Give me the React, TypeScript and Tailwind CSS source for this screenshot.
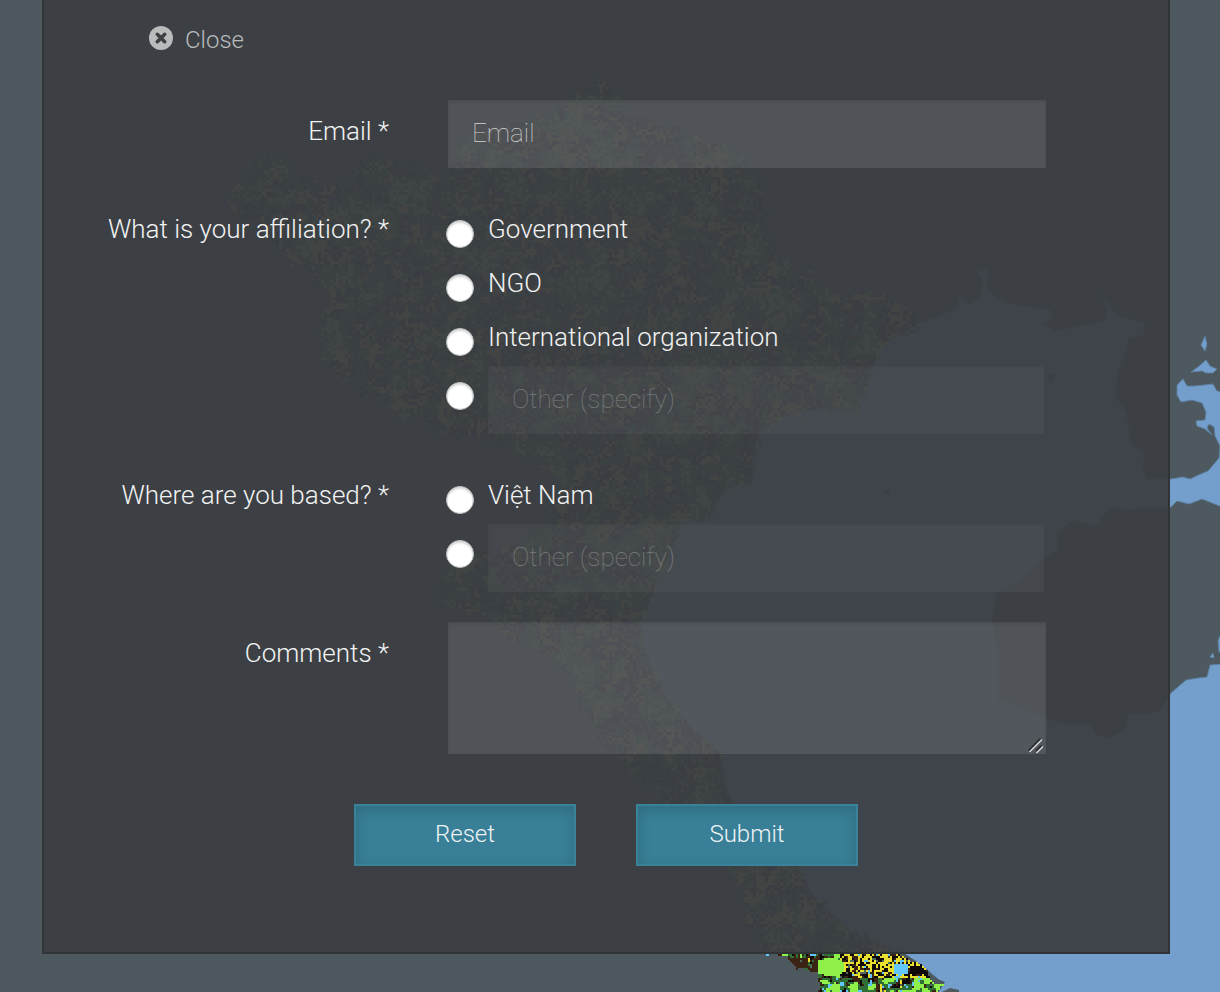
import React from "react";

type Point = [number, number];

const COUNTRY: Point[] = [
  [600, 78], [640, 120], [700, 135], [750, 160], [765, 215], [775, 255], [830, 290], [860, 290],
  [890, 296], [913, 312], [915, 332], [880, 340], [876, 360], [868, 385], [858, 412], [820, 408],
  [780, 418], [758, 434], [753, 450], [753, 482], [728, 488], [702, 522], [682, 518], [674, 545],
  [653, 590], [640, 622], [644, 650], [665, 695], [690, 725], [722, 755], [724, 780], [732, 800],
  [800, 868], [812, 895], [850, 930], [898, 952],
  [925, 968], [934, 980], [944, 984], [936, 993], [818, 993], [818, 970], [797, 968], [786, 955],
  [762, 950], [745, 920], [735, 880], [715, 855], [690, 830], [640, 778], [600, 740], [580, 700],
  [560, 660], [520, 645], [490, 620], [432, 594], [455, 555], [520, 545], [545, 515], [560, 480],
  [500, 440], [450, 435], [380, 405], [330, 370], [318, 330], [330, 290], [280, 250], [225, 203],
  [248, 158], [275, 155], [310, 185], [350, 180], [365, 152], [402, 158], [440, 180], [470, 130],
  [545, 115],
];

const TONES = ["#8ff04a", "#2f6f36", "#e9df2d", "#0e0808", "#3b2413", "#62c6ff", "#4f6a60"];

function hash(x: number, y: number) {
  const s = Math.sin(x * 127.1 + y * 311.7) * 43758.5453;
  return s - Math.floor(s);
}

function noise(x: number, y: number) {
  const ix = Math.floor(x);
  const iy = Math.floor(y);
  const fx = x - ix;
  const fy = y - iy;
  const top = hash(ix, iy) * (1 - fx) + hash(ix + 1, iy) * fx;
  const low = hash(ix, iy + 1) * (1 - fx) + hash(ix + 1, iy + 1) * fx;
  return top * (1 - fy) + low * fy;
}

function inside(x: number, y: number, poly: Point[]) {
  let hit = false;
  for (let i = 0, j = poly.length - 1; i < poly.length; j = i++) {
    const [xi, yi] = poly[i];
    const [xj, yj] = poly[j];
    if (yi > y !== yj > y && x < ((xj - xi) * (y - yi)) / (yj - yi) + xi) hit = !hit;
  }
  return hit;
}

function coastTone(x: number, y: number) {
  const a = noise(x / 5, y / 5);
  const b = noise(x / 4 + 70, y / 4 + 40);
  const c = noise(x / 3 + 20, y / 3 + 90);
  if (x > 892 && x < 908 && y > 962 && y < 974) return 5;
  if (x > 908 && x < 922 && y > 964 && y < 974) return 3;
  if (x < 818 && y > 957 && a > 0.35) return 4;
  if (Math.hypot((x - 829) / 15, (y - 966) / 9) < 1) return 0;
  if (c > 0.8) return 5;
  const yellowBand = x > 838 && y < 978;
  if (yellowBand && Math.abs(b - 0.5) < 0.1) return 2;
  if (!yellowBand && a > 0.6) return 0;
  if (!yellowBand && a > 0.3) return c < 0.35 ? 4 : 1;
  if (c > 0.62) return 4;
  if (c < 0.2) return 6;
  return b > 0.72 ? 2 : 3;
}

function toneAt(x: number, y: number) {
  if (y >= 954) return coastTone(x, y);
  const grain = hash(x, y);
  const green = noise(x / 14, y / 14) + (grain - 0.5) * 0.4;
  const yellow = noise(x / 9 + 70, y / 9 + 40) + (grain - 0.5) * 0.5;
  if (yellow > 0.74) return 2;
  if (green > 0.8) return 0;
  if (green > 0.45) return 1;
  if (grain > 0.97) return 5;
  return grain < 0.4 ? 3 : grain < 0.6 ? 4 : 6;
}

function landCover(from: number, to: number, size: number) {
  const paths = TONES.map(() => "");
  for (let y = from; y < to; y += size) {
    for (let x = 210; x < 950; x += size) {
      const spread = y < 940 ? 14 : 5;
      const jx = x + (noise(x / 5, y / 5) - 0.5) * spread;
      const jy = y + (noise(x / 5 + 30, y / 5) - 0.5) * spread;
      if (inside(jx, jy, COUNTRY)) {
        paths[toneAt(x, y)] += `M${x} ${y}h${size}v${size}h-${size}z`;
      }
    }
  }
  return paths;
}

const INLAND = landCover(78, 954, 3);
const SOUTH_COAST = landCover(954, 992, 2);

function MapBackdrop() {
  return (
    <svg
      className="absolute inset-0 h-full w-full"
      viewBox="0 0 1220 992"
      preserveAspectRatio="xMidYMid slice"
      aria-hidden="true"
    >
      <rect width="1220" height="992" fill="#4d585f" />
      <g fill="#749fcd" stroke="#5d7f9f" strokeWidth="1" strokeLinejoin="round">
        <path d="M868 385L876 360L882 345L915 325L940 316L958 308L960 296L968 306L980 298L984 285L978 272L988 269L986 288L1000 300L1014 305L1050 310L1052 318L1042 325L1056 331L1105 321L1108 310L1101 292L1116 315L1145 324L1143 335L1128 338L1124 356L1117 372L1116 398L1126 412L1131 444L1145 455L1142 465L1146 479L1171 479L1183 477L1190 479L1203 473L1208 471L1219 458L1220 446L1215 436L1214 427L1209 424L1207 428L1212 435L1205 429L1197 426L1196 421L1205 420L1206 412L1202 403L1192 400L1181 402L1177 395L1177 385L1183 379L1187 386L1195 386L1213 384L1217 391L1222 392V507L1202 499L1197 501L1189 504L1177 501L1171 507L1130 509L1108 508L1097 526L1073 520L1057 532L1058 550L1040 560L1022 580L996 592L992 620L997 650V698L1035 714L1062 724L1090 724L1095 735L1108 738L1125 730L1128 715L1160 712L1171 693L1186 680L1198 678L1207 677L1210 665L1222 664V993H935L944 984L925 968L898 952L850 930L812 895L800 868L732 800L724 780L722 755L690 725L665 695L644 650L640 622L653 590L674 545L682 518L702 522L728 488L753 482V450L758 434L780 418L820 408L858 412Z" />
        <path d="M1205 336L1207 344L1205 351L1201 345Z" />
        <path d="M1206 360L1210 366L1217 369L1213 373H1206L1202 371L1191 372L1198 367Z" />
        <path d="M1213 653L1214 658L1210 657ZM1221 633L1218 641L1219 652L1222 655Z" />
      </g>
      <g fill="#4d585f">
        <circle cx="1051" cy="377" r="4" />
        <circle cx="887" cy="492" r="3" />
        <path d="M896 948L922 965L927 975L945 982L938 993H910Z" />
        <path d="M942 992L950 988L959 990V992Z" />
      </g>
      <g opacity="0.5">
        {INLAND.map((d, i) => (
          <path key={TONES[i]} d={d} fill={TONES[i]} />
        ))}
      </g>
      <g shapeRendering="crispEdges">
        {SOUTH_COAST.map((d, i) => (
          <path key={TONES[i]} d={d} fill={TONES[i]} />
        ))}
        <path d="M766 954h3v2h-3z" fill="#62c6ff" />
      </g>
    </svg>
  );
}

function CloseIcon() {
  return (
    <svg viewBox="0 0 24 24" className="mt-1 size-6 text-[#b9bbbd]" aria-hidden="true">
      <circle cx="12" cy="12" r="12" fill="currentColor" />
      <path
        d="M8.300 8.300L15.700 15.700M15.700 8.300L8.300 15.700"
        stroke="#3d4044"
        strokeWidth="3.600"
        strokeLinecap="round"
      />
    </svg>
  );
}

const FIELD =
  "block w-full rounded-none border-0 bg-white/10 px-6 text-[26px] font-light text-[#e6e6e6] shadow-[inset_0_2px_3px_rgba(0,0,0,0.09)] outline-none placeholder:font-thin placeholder:text-[#d2d2d2]";
const LABEL = "text-right text-[26px] leading-9 font-light text-[#f2f2f2]";
const ROW = "grid grid-cols-[345px_minmax(0,1fr)] gap-x-[59px]";
const RADIO =
  "mt-4 -ml-0.5 size-7 shrink-0 appearance-none rounded-full border border-[#b9bbbc] bg-white shadow-[inset_0_2px_2px_rgba(0,0,0,0.16)] checked:bg-[radial-gradient(circle,#387f97_35%,#ffffff_40%)]";
const BUTTON =
  "h-[62px] w-[222px] border-2 border-[#3a8299] bg-[#387f97] pb-0.5 text-2xl font-light text-[#eef2f4] shadow-[inset_0_4px_14px_rgba(0,0,0,0.16)]";

function RadioGroup({ name, title, options }: { name: string; title: string; options: string[] }) {
  const otherId = `${name}-other`;
  return (
    <div role="radiogroup" aria-labelledby={`${name}-title`} className={ROW}>
      <span id={`${name}-title`} className={`${LABEL} pt-[7px]`}>
        {title}
      </span>
      <div>
        {options.map((option) => (
          <label key={option} className="flex h-[54px] gap-3.5">
            <input type="radio" name={name} value={option} className={RADIO} />
            <span className="pt-[7px] text-[26px] leading-9 font-light text-[#f2f2f2]">{option}</span>
          </label>
        ))}
        <div className="flex gap-3.5 pr-0.5">
          <input type="radio" name={name} value="other" aria-labelledby={otherId} className={RADIO} />
          <input
            id={otherId}
            type="text"
            aria-label="Other (specify)"
            placeholder="Other (specify)"
            className={`${FIELD} h-[68px] pb-0.5 opacity-40`}
          />
        </div>
      </div>
    </div>
  );
}

export default function App() {
  return (
    <div className="relative min-h-screen overflow-hidden bg-[#4d585f] font-['Roboto',sans-serif]">
      <MapBackdrop />
      <main className="relative mr-[50px] mb-[38px] ml-[42px] border-2 border-t-0 border-[#303437] bg-[#3c3f43]/94 bg-clip-padding pb-[86px]">
        <button
          type="button"
          className="ml-[105px] flex h-[100px] items-start gap-3 pt-[22px] text-2xl leading-9 font-light text-[#b9bbbd]"
        >
          <CloseIcon />
          Close
        </button>

        <form className="pr-[122px]">
          <div className={ROW}>
            <label htmlFor="email" className={`${LABEL} pt-[13px]`}>
              Email *
            </label>
            <input id="email" type="email" placeholder="Email" className={`${FIELD} h-[68px] pb-0.5`} />
          </div>

          <div className="mt-9 mb-[30px] flex flex-col gap-9">
            <RadioGroup
              name="affiliation"
              title="What is your affiliation? *"
              options={["Government", "NGO", "International organization"]}
            />
            <RadioGroup name="location" title="Where are you based? *" options={["Việt Nam"]} />
          </div>

          <div className={ROW}>
            <label htmlFor="comments" className={`${LABEL} pt-[13px]`}>
              Comments *
            </label>
            <div className="relative">
              <textarea id="comments" className={`${FIELD} h-[132px] resize-none py-4`} />
              <svg
                className="pointer-events-none absolute right-0 bottom-0 size-[18px]"
                viewBox="0 0 18 18"
                fill="none"
                strokeWidth="1.5"
                aria-hidden="true"
              >
                <path d="M0.500 14.500L12.500 2.500M8 15L13.500 9.500" stroke="#242629" />
                <path d="M1.500 16L14 3.500M8.500 17L15 10.500" stroke="#d4d5d6" />
              </svg>
            </div>
          </div>

          <div className="mt-[50px] -mr-[122px] flex justify-center gap-[60px]">
            <button type="reset" className={BUTTON}>
              Reset
            </button>
            <button type="submit" className={BUTTON}>
              Submit
            </button>
          </div>
        </form>
      </main>
    </div>
  );
}
